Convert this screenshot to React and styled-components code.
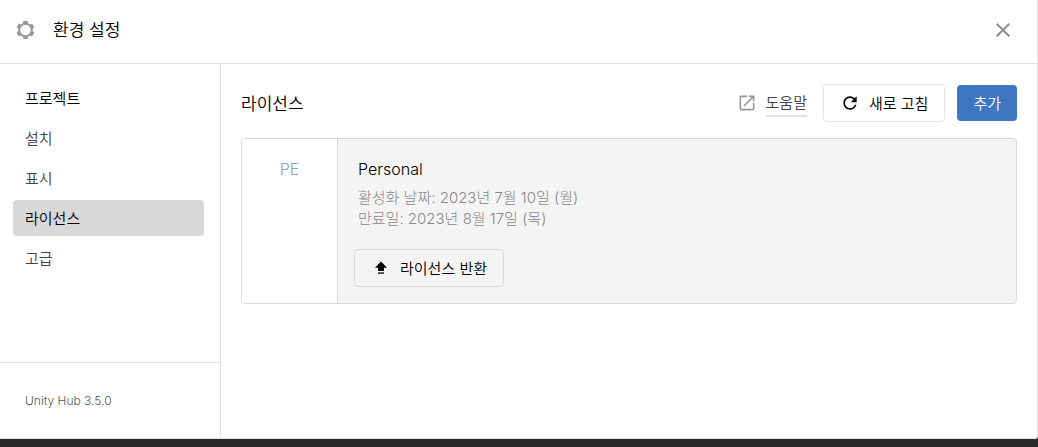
import React, { useState } from 'react'
import styled, { createGlobalStyle } from 'styled-components'
import { MdClose, MdOpenInNew, MdRefresh } from 'react-icons/md'

const menu = [
    { id: 'projects', label: '프로젝트', strong: true },
    { id: 'installs', label: '설치' },
    { id: 'appearance', label: '표시' },
    { id: 'licenses', label: '라이선스' },
    { id: 'advanced', label: '고급' },
]

const licenses = [
    {
        code: 'PE',
        name: 'Personal',
        activated: '활성화 날짜: 2023년 7월 10일 (월)',
        expires: '만료일: 2023년 8월 17일 (목)',
    },
]

function GearIcon() {
    return (
        <svg width='19' height='20' viewBox='0 0 19 20' aria-hidden='true'>
            <g fill='#999'>
                {[0, 60, 120, 180, 240, 300].map((angle) => (
                    <path key={angle} d='M6.6 4.4 7.4 1h4.2l.8 3.4z' transform={`rotate(${angle} 9.5 10)`} />
                ))}
            </g>
            <circle cx='9.5' cy='10' r='6.2' fill='none' stroke='#999' strokeWidth='2' />
        </svg>
    )
}

function ReturnIcon() {
    return (
        <svg width='12' height='14' viewBox='0 0 12 14' aria-hidden='true'>
            <path d='M6 .6 0 6.8h3V10h6V6.8h3z' />
            <path d='M3 11.2h6V13H3z' fill='#444' />
        </svg>
    )
}

function App() {
    const [active, setActive] = useState('licenses')

    return (
        <>
            <GlobalStyle />
            <Window>
                <Header>
                    <GearIcon />
                    <Title>환경 설정</Title>
                    <CloseButton type='button' aria-label='닫기'>
                        <MdClose size={24} />
                    </CloseButton>
                </Header>
                <Body>
                    <Sidebar>
                        <Menu>
                            {menu.map((item) => (
                                <MenuItem
                                    key={item.id}
                                    type='button'
                                    $active={item.id === active}
                                    $strong={item.strong}
                                    onClick={() => setActive(item.id)}
                                >
                                    {item.label}
                                </MenuItem>
                            ))}
                        </Menu>
                        <Version>Unity Hub 3.5.0</Version>
                    </Sidebar>
                    <Main>
                        <Toolbar>
                            <Heading>라이선스</Heading>
                            <HelpLink href='#help'>
                                <MdOpenInNew size={20} />
                                <span>도움말</span>
                            </HelpLink>
                            <OutlineButton type='button'>
                                <MdRefresh size={20} />
                                새로 고침
                            </OutlineButton>
                            <AddButton type='button'>추가</AddButton>
                        </Toolbar>
                        {licenses.map((license) => (
                            <Card key={license.code}>
                                <CardCode>{license.code}</CardCode>
                                <CardBody>
                                    <CardName>{license.name}</CardName>
                                    <CardText>{license.activated}</CardText>
                                    <CardText>{license.expires}</CardText>
                                    <CardActions>
                                        <OutlineButton type='button' $muted>
                                            <ReturnIcon />
                                            라이선스 반환
                                        </OutlineButton>
                                    </CardActions>
                                </CardBody>
                            </Card>
                        ))}
                    </Main>
                </Body>
            </Window>
        </>
    )
}

const GlobalStyle = createGlobalStyle`
    * {
        box-sizing: border-box;
    }
    body {
        margin: 0;
        background: #272928;
        color: #000;
        font-family: Inter, 'Noto Sans CJK KR', sans-serif;
        font-size: 15px;
        font-weight: 350;
    }
    button {
        font: inherit;
        cursor: pointer;
    }
`

const Window = styled.div`
    display: flex;
    flex-direction: column;
    min-height: calc(100vh - 8px);
    margin-bottom: 8px;
    background: #fff;
    border: solid #e3e3e3;
    border-width: 0 1px 1px 0;
    border-bottom-right-radius: 3px;
`

const Header = styled.header`
    display: flex;
    align-items: center;
    height: 64px;
    padding: 0 20px 4px 16px;
    border-bottom: 1px solid #e3e3e3;
`

const Title = styled.h1`
    flex: 1;
    margin: 0 0 0 18px;
    padding-bottom: 2px;
    font-size: 17px;
    font-weight: 350;
`

const CloseButton = styled.button`
    display: flex;
    padding: 2px;
    border: 0;
    background: none;
    color: #8c8c8c;
`

const Body = styled.div`
    display: flex;
    flex: 1;
`

const Sidebar = styled.aside`
    display: flex;
    flex-direction: column;
    justify-content: space-between;
    width: 221px;
    flex-shrink: 0;
    border-right: 1px solid #e3e3e3;
`

const Menu = styled.nav`
    display: flex;
    flex-direction: column;
    gap: 4px;
    padding: 16px 16px 16px 13px;
`

const MenuItem = styled.button`
    height: 36px;
    padding: 0 12px 2px;
    border: 0;
    border-radius: 4px;
    background: ${({ $active }) => ($active ? '#d8d8d8' : 'transparent')};
    color: ${({ $active, $strong }) => ($active || $strong ? '#000' : '#444')};
    text-align: left;
`

const Version = styled.footer`
    padding: 28px 25px 27px;
    border-top: 1px solid #e3e3e3;
    color: #555;
    font-size: 12px;
    line-height: 20px;
`

const Main = styled.main`
    flex: 1;
    padding: 20px;
`

const Toolbar = styled.div`
    display: flex;
    align-items: center;
    gap: 12px;
    margin-bottom: 16px;
`

const Heading = styled.h2`
    flex: 1;
    margin: 0;
    padding-bottom: 2px;
    font-size: 17px;
    font-weight: 350;
`

const HelpLink = styled.a`
    display: flex;
    align-items: center;
    gap: 9px;
    margin-right: 4px;
    color: #444;
    text-decoration: none;

    svg {
        color: #999;
    }
    span {
        padding-top: 2px;
        border-bottom: 2px solid #e3e3e3;
        line-height: 24px;
    }
`

const OutlineButton = styled.button`
    display: flex;
    align-items: center;
    gap: ${({ $muted }) => ($muted ? '13px' : '9px')};
    height: 38px;
    padding: 0 16px 1px;
    padding-left: ${({ $muted }) => ($muted ? '20px' : '16px')};
    border: 1px solid ${({ $muted }) => ($muted ? '#dadada' : '#e3e3e3')};
    border-radius: 4px;
    background: ${({ $muted }) => ($muted ? 'transparent' : '#fff')};
    color: #000;
`

const AddButton = styled.button`
    height: 36px;
    padding: 0 16px 2px;
    border: 0;
    border-radius: 4px;
    background: #3d77c2;
    color: #fff;
`

const Card = styled.section`
    display: flex;
    border: 1px solid #d9d9d9;
    border-radius: 4px;
    background: #f4f4f4;
    overflow: hidden;
`

const CardCode = styled.div`
    width: 96px;
    padding-top: 20px;
    border-right: 1px solid #d9d9d9;
    background: #fff;
    color: #90a4ae;
    font-size: 16px;
    line-height: 20px;
    text-align: center;
`

const CardBody = styled.div`
    flex: 1;
    padding: 20px 20px 16px;
`

const CardName = styled.h3`
    margin: 0 0 8px;
    font-size: 16px;
    font-weight: 350;
    line-height: 20px;
`

const CardText = styled.p`
    margin: 0;
    color: #888;
    font-size: 15px;
    font-weight: 300;
    line-height: 21px;
`

const CardActions = styled.div`
    display: flex;
    margin: 20px 0 0 -4px;
`

export default App
